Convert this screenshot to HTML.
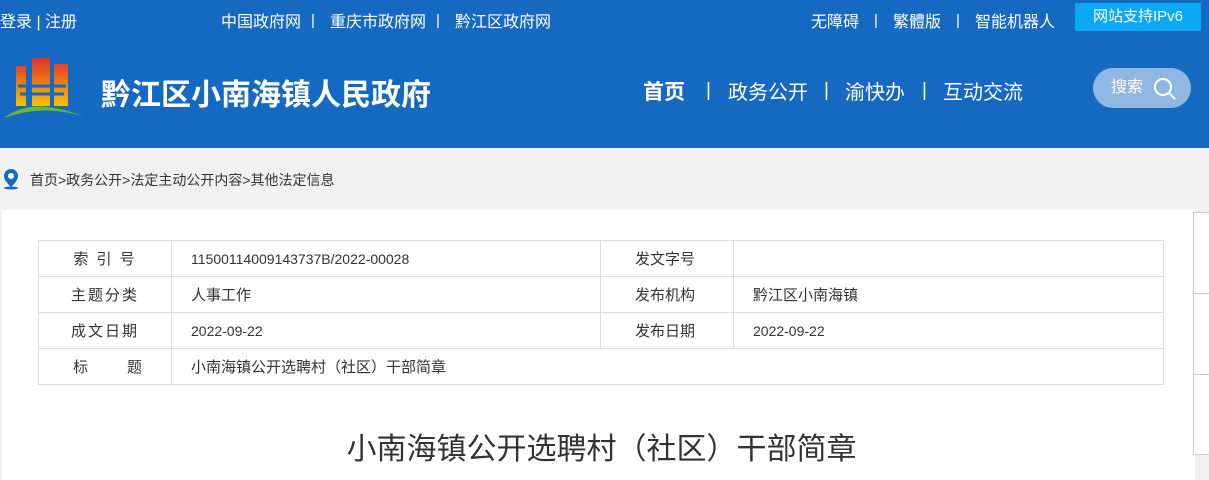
<!DOCTYPE html>
<html><head><meta charset="utf-8"><style>
*{margin:0;padding:0;box-sizing:border-box}
body{width:1209px;height:474px;overflow:hidden;background:#f1f1f1;font-family:"Liberation Sans","Noto Sans CJK SC",sans-serif;position:relative}
.hdr{position:absolute;left:0;top:0;width:1209px;height:148px;background:#1569c0;color:#fff}
.t{position:absolute;font-size:16px;top:8px;white-space:nowrap}
.p{top:12px;font-size:15px}
.ipv{position:absolute;left:1075px;top:3px;width:126px;height:28px;background:#0aa8f5;font-size:15px;text-align:center;line-height:28px}
.name{position:absolute;left:101px;top:70px;font-size:30px;font-weight:bold}
.nav{position:absolute;top:76px;font-size:20px;white-space:nowrap}
.np{top:80px;font-size:19px}
.srch{position:absolute;left:1093px;top:68px;width:98px;height:40px;border-radius:20px;background:#8fb7e2;font-size:16px;line-height:40px;padding-left:18px}
.bc{position:absolute;left:30px;top:170px;font-size:14px;color:#333}
.card{position:absolute;left:2px;top:210px;width:1193px;height:270px;background:#fff}
table{position:absolute;left:38px;top:240px;border-collapse:collapse;font-size:15px;color:#333}
td{border:1px solid #ddd;height:36px}
.l{width:133px;text-align:center;letter-spacing:2px}
.side{position:absolute;left:1193px;top:212px;width:20px;height:243px;border:1px solid #ccc;background:#fff}
h1{position:absolute;left:0;width:1203px;text-align:center;top:424px;font-size:30px;font-weight:normal;color:#333}
</style></head><body>
<div class="hdr">
<div class="t" style="left:0">登录 | 注册</div>
<div class="t" style="left:221px">中国政府网</div><div class="t p" style="left:311px">|</div>
<div class="t" style="left:330px">重庆市政府网</div><div class="t p" style="left:436px">|</div>
<div class="t" style="left:455px">黔江区政府网</div>
<div class="t" style="left:811px">无障碍</div><div class="t p" style="left:874px">|</div>
<div class="t" style="left:893px">繁體版</div><div class="t p" style="left:956px">|</div>
<div class="t" style="left:975px">智能机器人</div>
<div class="ipv">网站支持IPv6</div>
<svg style="position:absolute;left:2px;top:56px" width="80" height="64" viewBox="0 0 80 64">
<defs><linearGradient id="g" x1="0" y1="0" x2="0" y2="1"><stop offset="0" stop-color="#e0302a"/><stop offset="1" stop-color="#f7c300"/></linearGradient></defs>
<path d="M14 10h10v40h-10z M30 2h18v48h-18z M52 8h14v42h-14z" fill="url(#g)"/>
<path d="M16 30h48M18 38h44" stroke="#1569c0" stroke-width="3"/>
<path d="M2 62Q30 40 80 60Q40 48 2 62z" fill="#6ab536"/>
</svg>
<div class="name">黔江区小南海镇人民政府</div>
<div class="nav" style="left:643px;font-weight:bold;font-size:21px">首页</div>
<div class="nav np" style="left:706px">|</div>
<div class="nav" style="left:728px">政务公开</div>
<div class="nav np" style="left:824px">|</div>
<div class="nav" style="left:845px">渝快办</div>
<div class="nav np" style="left:922px">|</div>
<div class="nav" style="left:943px">互动交流</div>
<div class="srch">搜索<svg style="position:absolute;left:60px;top:9px" width="24" height="24" viewBox="0 0 24 24"><circle cx="10" cy="10" r="8" fill="none" stroke="#fff" stroke-width="2"/><path d="M16 16l6 6" stroke="#fff" stroke-width="2"/></svg></div>
</div>
<svg style="position:absolute;left:2px;top:168px" width="18" height="22" viewBox="0 0 18 22"><path d="M9 1a7 7 0 0 1 7 7c0 5-7 11-7 11S2 13 2 8a7 7 0 0 1 7-7z" fill="#1569c0"/><circle cx="9" cy="8" r="3" fill="#fff"/><ellipse cx="9" cy="20" rx="7" ry="1.5" fill="#1569c0"/></svg>
<div class="bc">首页&gt;政务公开&gt;法定主动公开内容&gt;其他法定信息</div>
<div class="card"></div>
<table>
<tr><td class="l">索 引 号</td><td style="width:429px;padding-left:19px;font-size:14px">11500114009143737B/2022-00028</td><td style="width:133px;padding-left:34px">发文字号</td><td style="width:430px"></td></tr>
<tr><td class="l">主题分类</td><td style="padding-left:19px">人事工作</td><td style="padding-left:34px">发布机构</td><td style="padding-left:19px">黔江区小南海镇</td></tr>
<tr><td class="l">成文日期</td><td style="padding-left:19px;font-size:14px">2022-09-22</td><td style="padding-left:34px">发布日期</td><td style="padding-left:19px;font-size:14px">2022-09-22</td></tr>
<tr><td class="l" style="text-align:left;padding-left:34px">标 &nbsp;&nbsp;&nbsp;&nbsp;&nbsp;题</td><td colspan="3" style="padding-left:19px">小南海镇公开选聘村（社区）干部简章</td></tr>
</table>
<div class="side"><div style="border-bottom:1px solid #ccc;height:81px"></div><div style="border-bottom:1px solid #ccc;height:81px"></div></div>
<h1>小南海镇公开选聘村（社区）干部简章</h1>
</body></html>
